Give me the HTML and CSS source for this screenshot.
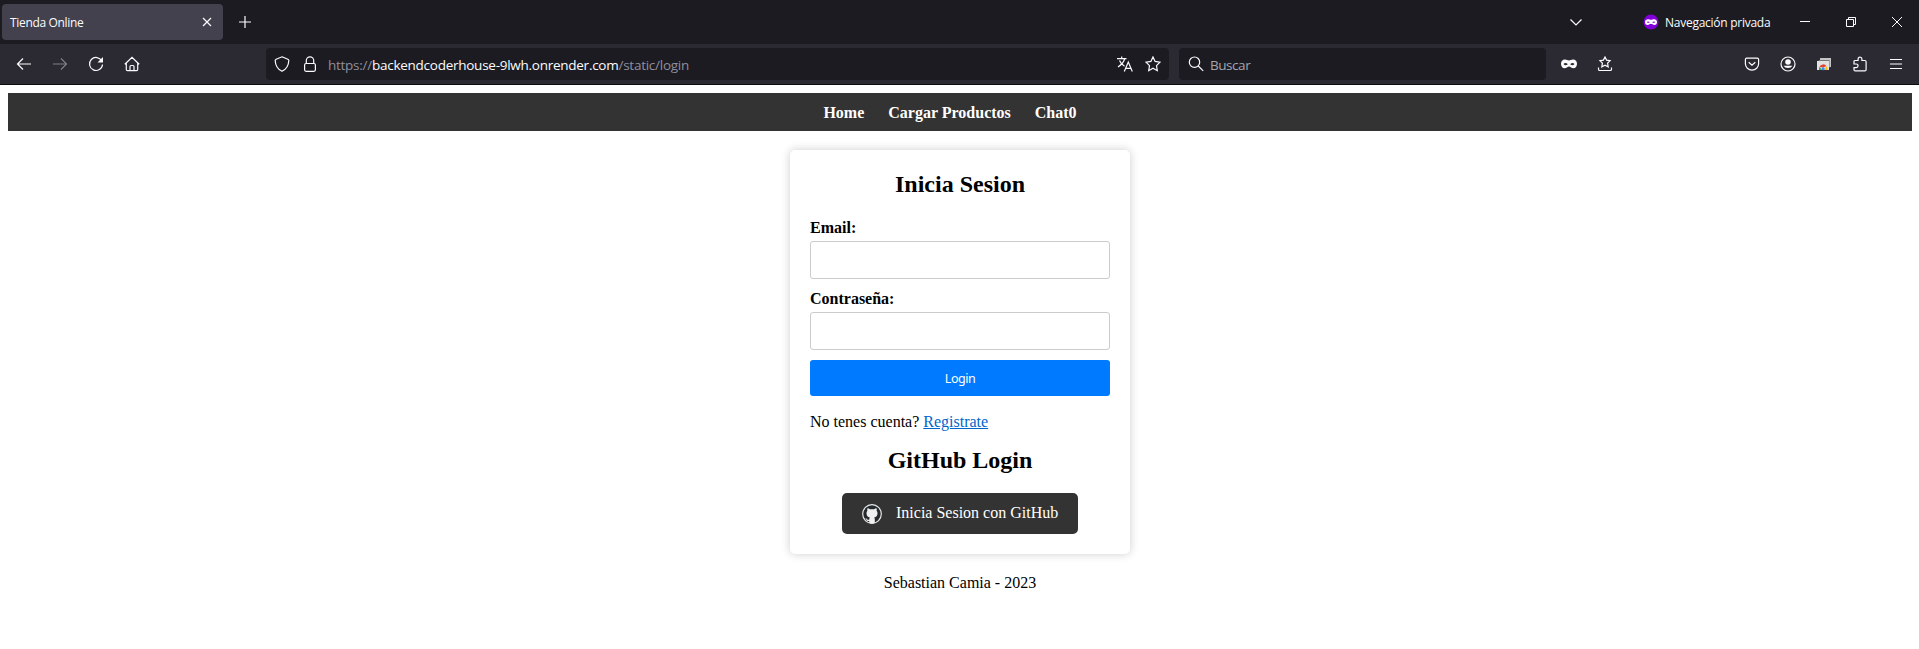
FILE: index.html
```html
<!DOCTYPE html>
<html lang="es">
<head>
<meta charset="utf-8">
<title>Tienda Online</title>
<link rel="stylesheet" href="styles.css">
</head>
<body>
<header class="browser">
  <div class="tabbar">
    <div class="tab">
      <span class="tab-title">Tienda Online</span>
      <svg class="tab-close" width="10" height="10" viewBox="0 0 10 10"><path d="M1 1l8 8M9 1L1 9"/></svg>
    </div>
    <svg class="new-tab" width="12" height="12" viewBox="0 0 12 12"><path d="M6 0v12M0 6h12"/></svg>
    <div class="window-area">
      <svg class="chevron" width="14" height="14" viewBox="0 0 14 14"><path d="M1.500 4.500L7 10l5.500-5.500"/></svg>
      <div class="private">
        <svg width="16" height="16" viewBox="0 0 16 16"><circle class="purple" cx="8" cy="8" r="7.500"/><path class="mask" fill-rule="evenodd" d="M5 5.200c1.200 0 2 .6 3 .6s1.800-.6 3-.6c1.700 0 3 1 3 2.700 0 1.900-1 3-2.500 3C10 10.900 9 9.800 8 9.800s-2 1.100-3.500 1.100C3 10.900 2 9.800 2 7.900c0-1.700 1.300-2.700 3-2.700zM3.800 8c.8 1.100 2.100 1.100 3 .2-.9-1-2.200-1.100-3-.2zm5.400.2c.9.9 2.200.9 3-.2-.8-.9-2.100-.8-3 .2z"/></svg>
        <span class="private-text">Navegación privada</span>
      </div>
      <div class="win-btn"><svg width="10" height="10" viewBox="0 0 10 10"><path d="M0 4.500h10"/></svg></div>
      <div class="win-btn"><svg width="10" height="10" viewBox="0 0 10 10"><path d="M.5 2.500h7v7h-7zM2.500 2.500v-2h7v7h-2"/></svg></div>
      <div class="win-btn"><svg width="10" height="10" viewBox="0 0 10 10"><path d="M0 0l10 10M10 0L0 10"/></svg></div>
    </div>
  </div>
  <div class="toolbar">
    <div class="tool"><svg width="16" height="16" viewBox="0 0 16 16"><path d="M15 8H2M7 2.500L1.500 8 7 13.500"/></svg></div>
    <div class="tool dim"><svg width="16" height="16" viewBox="0 0 16 16"><path d="M1 8h13M9 2.500L14.500 8 9 13.500"/></svg></div>
    <div class="tool"><svg width="16" height="16" viewBox="0 0 16 16"><path d="M13.800 5A6.500 6.500 0 1 0 14.500 8.500"/><path class="solid" d="M15 1v5.500H9.500z"/></svg></div>
    <div class="tool"><svg width="16" height="16" viewBox="0 0 16 16"><path d="M.8 8.200L8 1.300l7.200 6.900M2.300 7v6.500q0 1.200 1.200 1.200h9q1.200 0 1.200-1.200V7M6 14.500v-4q0-1 1-1h2q1 0 1 1v4"/></svg></div>
    <div class="urlbar">
      <svg width="16" height="16" viewBox="0 0 16 16"><path d="M8 .8l5.800 2.400q1 .5 1 1.300C14.600 9.500 12.300 13.300 8 15.300 3.700 13.300 1.400 9.500 1.200 4.500q0-.8 1-1.300z"/></svg>
      <svg class="lock" width="16" height="16" viewBox="0 0 16 16"><rect x="2.600" y="7.500" width="10.800" height="7.800" rx="1.500"/><path d="M4.300 7.500V4.500a3.700 3.700 0 0 1 7.400 0v3"/></svg>
      <span class="url">https://<b>backendcoderhouse-9lwh.onrender.com</b>/static/login</span>
      <svg class="translate" width="16" height="16" viewBox="0 0 16 16"><path d="M0 2.600h9.500M4.700.5v2M7.600 3C6.800 6 4 9 1 11M2.500 4.500C3.500 7 5.500 9 7.500 10.200"/><path d="M7.300 15.500L11.300 6l4 9.500M8.700 12.300h5.200"/></svg>
      <svg width="16" height="16" viewBox="0 0 16 16"><path d="M8 .9l2.100 4.500 4.900.7-3.500 3.500.8 5.100L8 12.300l-4.300 2.400.8-5.100L1 6.100l4.900-.7z"/></svg>
    </div>
    <div class="searchbar">
      <svg width="16" height="16" viewBox="0 0 16 16"><circle cx="6.500" cy="6.200" r="5.200"/><path d="M10.300 10l4.900 4.900"/></svg>
      <span class="search-text">Buscar</span>
    </div>
    <div class="tool"><svg width="16" height="16" viewBox="0 0 16 16"><path class="solid" fill-rule="evenodd" d="M4 3.500c1.800 0 2.600 1 4 1s2.200-1 4-1c2.500 0 4 1.700 4 4.200 0 2.700-1.500 4.600-3.500 4.600S9.500 10.500 8 10.500s-2.500 1.800-4.500 1.800S0 10.400 0 7.700C0 5.200 1.500 3.500 4 3.500zM2.500 8c1.200 1.700 3 1.600 4.300.2C5.500 6.700 3.700 6.600 2.500 8zm6.700.2c1.300 1.400 3.100 1.500 4.300-.2-1.200-1.400-3-1.300-4.300.2z"/></svg></div>
    <div class="tool"><svg width="16" height="16" viewBox="0 0 16 16"><path d="M8 1l1.600 3.100 3.500.5-2.500 2.600.6 3.700L8 9.200l-3.200 1.700.6-3.700-2.500-2.600 3.500-.5zM1.500 11.500v1.700q0 1.300 1.300 1.300h10.400q1.300 0 1.300-1.300v-1.700"/></svg></div>
    <div class="tool pocket"><svg width="16" height="16" viewBox="0 0 16 16"><path d="M2.700 2.200h10.600q1.300 0 1.300 1.300v4.300a6.600 6.300 0 0 1-13.200 0V3.500q0-1.300 1.300-1.300zM4.700 6.200L8 9.300l3.300-3.100"/></svg></div>
    <div class="tool"><svg width="16" height="16" viewBox="0 0 16 16"><circle cx="8" cy="8" r="7"/><circle class="solid" cx="8" cy="6" r="2.800"/><path class="solid" d="M3.500 9.700h9a5 4 0 0 1-9 0z"/></svg></div>
    <div class="tool"><svg class="photos" width="16" height="16" viewBox="0 0 16 16"><path fill="#c4c4c4" d="M4 2h11v9H4z"/><path fill="#777" d="M2.500 4h11v8h-11z"/><path fill="#e1e1e1" d="M1 5h12v9H1z"/><path fill="#e34336" d="M3.500 11a4 4 0 0 1 7-1L7 11.500z"/><path fill="#35a853" d="M3 14q-.3-2 .6-3.200L6 14z"/><path fill="#fbbc05" d="M8.500 14l2-4q1 1.500 1 4z"/><circle fill="#4285f4" cx="7.200" cy="12.800" r="1.500"/></svg></div>
    <div class="tool"><svg width="16" height="16" viewBox="0 0 16 16"><path d="M2 8V5.600q0-1.100 1.100-1.100h3V3.100a1.900 1.900 0 0 1 3.800 0v1.400h3q1.200 0 1.200 1.200v8q0 1.200-1.200 1.200H3.200Q2 14.900 2 13.700v-2h2.200a1.800 1.800 0 0 0 0-3.700z"/></svg></div>
    <div class="tool"><svg width="16" height="16" viewBox="0 0 16 16"><path d="M2 3.500h12M2 8h12M2 12.500h12"/></svg></div>
  </div>
</header>
<main class="page">
  <nav class="nav"><a>Home</a><a>Cargar Productos</a><a>Chat0</a></nav>
  <section class="card">
    <h2 class="title">Inicia Sesion</h2>
    <form class="form">
      <label class="label" for="email">Email:</label>
      <input class="input" id="email" type="email">
      <label class="label" for="pass">Contraseña:</label>
      <input class="input" id="pass" type="password">
      <button class="login" type="button">Login</button>
    </form>
    <p class="register">No tenes cuenta? <a class="link" href="#">Registrate</a></p>
    <h2 class="title github-title">GitHub Login</h2>
    <a class="github">
      <svg width="20" height="20" viewBox="0 0 20 20"><circle cx="10" cy="10" r="9.300" fill="#24292e" stroke="#e8e8e8" stroke-width="1.200"/><path fill="#f0f0f0" d="M5.500 4.300c.9 0 1.700.5 2.400 1h4.200c.7-.5 1.500-1 2.400-1 .4.900.3 1.700.1 2.400.7.800 1 1.700.9 2.800-.1 2.300-1.300 3.600-3.300 3.900.5.600.6 1.100.6 1.900v3.600q-2.800 1-5.600 0v-2c-1.700.2-2.400-.4-2.900-1.500-.3-.6-.6-.8-1-1.200.9-.2 1.400.2 1.900 1 .5.700 1.100.8 2 .5.100-1 .2-1.700.6-2.300-2-.3-3.200-1.600-3.300-3.900 0-1.100.2-2 .9-2.800-.2-.7-.3-1.500.1-2.400z"/></svg>
      <span class="github-text">Inicia Sesion con GitHub</span>
    </a>
  </section>
  <footer class="footer">Sebastian Camia - 2023</footer>
</main>
</body>
</html>
```
FILE: styles.css
```css
* { box-sizing: border-box; }
body {
  margin: 0;
  background: #fff;
  color: #000;
  font: 16px/18px "Liberation Serif", serif;
  overflow: hidden;
}
svg { display: block; flex: none; }

.browser {
  width: 1920px;
  color: #fbfbfe;
  font-family: "Open Sans", "Noto Sans", sans-serif;
  border-bottom: 1px solid #0c0c0d;
}
.browser svg { fill: none; stroke: #fbfbfe; stroke-width: 1.2; }
.browser .solid { fill: #fbfbfe; stroke: none; }
.tabbar {
  display: flex;
  align-items: center;
  height: 44px;
  padding-left: 2px;
  background: #1c1b22;
}
.tab {
  display: flex;
  align-items: center;
  justify-content: space-between;
  width: 221px;
  height: 36px;
  padding: 0 11px 0 8px;
  border-radius: 4px;
  background: #42414d;
}
.tab-title, .private-text { padding-top: 1px; font-size: 12px; white-space: nowrap; }
.tab-title { letter-spacing: -0.33px; }
.private-text { letter-spacing: -0.26px; }
.new-tab { margin-left: 16px; }
.window-area { display: flex; align-items: center; margin-left: auto; }
.chevron { margin-right: 60px; }
.private { display: flex; align-items: center; gap: 6px; width: 139px; }
.private svg { stroke: none; }
.private .purple { fill: #8000d7; }
.private .mask { fill: #fff; }
.win-btn { display: flex; justify-content: center; width: 46px; }
.win-btn svg { stroke-width: 1; }

.toolbar {
  display: flex;
  align-items: center;
  height: 40px;
  padding: 0 6px;
  background: #2b2a33;
}
.tool { display: flex; justify-content: center; width: 36px; flex: none; }
.dim { opacity: 0.4; }
.pocket { margin-left: auto; }
.browser .photos { stroke: none; }
.urlbar, .searchbar {
  display: flex;
  align-items: center;
  height: 32px;
  border-radius: 4px;
  background: #1c1b22;
}
.urlbar { width: 903px; margin-left: 116px; padding: 0 8px; }
.lock { margin-left: 12px; }
.url { margin-left: 10px; padding-top: 2px; color: #8f8f9d; font-size: 13.5px; letter-spacing: -0.26px; white-space: nowrap; }
.url b { color: #fbfbfe; font-weight: 400; }
.translate { margin: 0 12px 0 auto; }
.searchbar { width: 367px; margin: 0 5px 0 10px; padding: 0 9px; gap: 6px; }
.search-text { padding-top: 2px; color: #a5a5ae; font-size: 13.5px; letter-spacing: -0.45px; }

.page { width: 1920px; padding: 8px; }
.nav {
  display: flex;
  justify-content: center;
  gap: 24px;
  height: 38px;
  padding: 11px 20px 9px 0;
  background: #333;
  color: #fff;
  font-weight: 700;
}
.card {
  width: 340px;
  height: 404px;
  margin: 19px auto 0;
  padding: 20px;
  border-radius: 5px;
  background: #fff;
  box-shadow: 0 0 10px rgba(0, 0, 0, 0.2);
}
.title { margin: 0 0 20px; font-size: 24px; line-height: 28px; text-align: center; }
.form { display: flex; flex-direction: column; }
.label { margin-bottom: 4px; font-weight: 700; line-height: 19px; }
.input {
  height: 38px;
  margin: 0 0 10px;
  border: 1px solid #ccc;
  border-radius: 3px;
  background: #fff;
}
.login {
  height: 36px;
  padding: 0;
  border: 0;
  border-radius: 3px;
  background: #007bff;
  color: #fff;
  font: 12.5px "Noto Sans", sans-serif;
  letter-spacing: -0.5px;
}
.register { margin: 17px 0 15px; }
.link { color: #0066cc; }
.github-title { margin-bottom: 19px; }
.github {
  display: flex;
  align-items: center;
  gap: 14px;
  width: 236px;
  height: 41px;
  margin: 0 auto;
  padding: 0 20px;
  border-radius: 5px;
  background: #333;
  color: #fff;
  white-space: nowrap;
}
.github-text { padding-bottom: 2px; }
.footer { margin-top: 20px; text-align: center; }
```
